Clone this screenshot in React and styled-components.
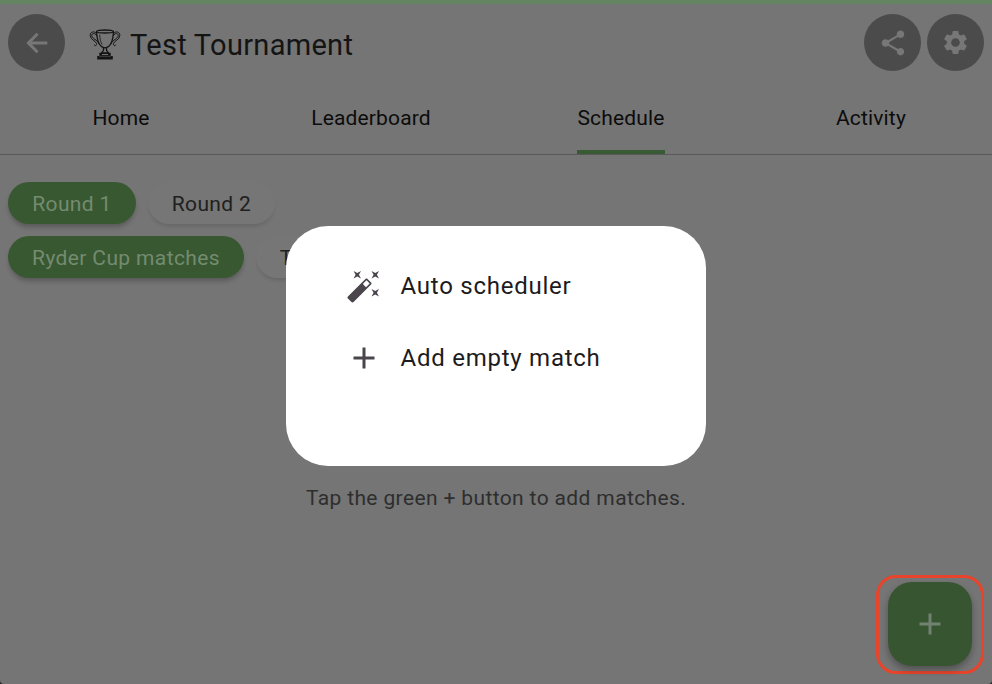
import React from "react";
import styled, { createGlobalStyle } from "styled-components";
import { MdAdd, MdSettings, MdShare } from "react-icons/md";

const GlobalStyle = createGlobalStyle`
  * { box-sizing: border-box; }
  html, body { margin: 0; background: #242424; overflow: hidden; }
  body { font-family: Roboto, "Liberation Sans", sans-serif; }
  button { font: inherit; border: 0; padding: 0; }
  svg { display: block; flex: none; }
`;

const Screen = styled.div`
  position: relative;
  width: 992px;
  height: 684px;
  display: flex;
  flex-direction: column;
  background: #757575;
  border-top: 4px solid #638561;
  border-radius: 0 0 4px 4px;
  overflow: hidden;
`;

const TopBar = styled.header`
  height: 77px;
  padding: 0 8px;
  display: flex;
  align-items: center;
`;

const RoundButton = styled.button`
  width: 57px;
  height: 57px;
  border-radius: 50%;
  display: grid;
  place-items: center;
  background: #4b4b4b;
  color: #777;
`;

const Title = styled.h1`
  flex: 1;
  margin: 0 0 0 24px;
  padding-top: 5px;
  display: flex;
  align-items: center;
  gap: 9px;
  font-size: 29px;
  line-height: 36px;
  font-weight: 400;
  letter-spacing: 0.3px;
  color: #141414;
`;

const Actions = styled.div`
  display: flex;
  gap: 6px;
`;

const Tabs = styled.nav`
  height: 74px;
  display: grid;
  grid-template-columns: repeat(4, 250px);
  justify-content: center;
  border-bottom: 1px solid #585958;
`;

const Tab = styled.button`
  justify-self: center;
  display: flex;
  align-items: center;
  padding-top: 4px;
  background: none;
  font-size: 21px;
  letter-spacing: 0.15px;
  color: #0c0c0c;
  border-bottom: 4px solid ${(p) => (p.$active ? "#385a34" : "transparent")};
`;

const Filters = styled.section`
  padding: 27px 8px 0;
  display: flex;
  flex-direction: column;
  gap: 12px;
`;

const ChipRow = styled.div`
  display: flex;
  gap: 12px;
`;

const Chip = styled.button`
  width: ${(p) => p.$width}px;
  height: 42px;
  padding-top: 2px;
  border-radius: 21px;
  font-size: 21px;
  letter-spacing: 0.37px;
  white-space: nowrap;
  background: ${(p) => (p.$selected ? "#385831" : "#767676")};
  color: ${(p) => (p.$selected ? "#748b70" : "#202020")};
  box-shadow: ${(p) =>
    p.$selected ? "0 4px 5px -1px rgba(0,0,0,.24)" : "0 4px 4px -2px rgba(0,0,0,.14)"};
`;

const Hint = styled.p`
  margin: 205px 0 0;
  text-align: center;
  font-size: 21px;
  line-height: 30px;
  letter-spacing: 0.37px;
  color: #2e2e2e;
`;

const FabFrame = styled.div`
  position: absolute;
  right: 8px;
  bottom: 10px;
  width: 108px;
  height: 99px;
  padding: 4px 0 0 9px;
  border: 3px solid #e6452b;
  border-radius: 20px;
`;

const Fab = styled.button`
  width: 84px;
  height: 84px;
  border-radius: 24px;
  display: grid;
  place-items: center;
  background: #385532;
  color: #718370;
  box-shadow: 0 4px 7px rgba(0, 0, 0, 0.3);
`;

const Dialog = styled.div`
  position: absolute;
  left: 286px;
  top: 222px;
  width: 420px;
  height: 240px;
  padding: 24px 60px;
  border-radius: 42px;
  background: #fff;
`;

const MenuItem = styled.button`
  width: 100%;
  height: 72px;
  display: flex;
  align-items: center;
  gap: 18.5px;
  background: none;
  font-size: 24px;
  letter-spacing: 0.75px;
  text-align: left;
  color: #1d1b20;
  svg { color: #49454b; }
`;

const BackIcon = () => (
  <svg width="30" height="30" viewBox="0 0 30 30" fill="none" stroke="currentColor" strokeWidth="3">
    <path d="M25.3 15H7M15.600 5.800L6.400 15L15.600 24.200" />
  </svg>
);

const TrophyIcon = () => (
  <svg width="32" height="32" viewBox="0 0 32 32" fill="none" stroke="currentColor" strokeWidth="1.3" strokeLinejoin="round">
    <path d="M7.5 2.5C8 11 9.5 18.5 16 18.8C22.5 18.5 24 11 24.5 2.5" />
    <ellipse cx="16" cy="2.5" rx="8.5" ry="1.5" />
    <path d="M7.7 4.8C5.5 1.7 1 2.6 1.2 6.5C1.5 11 6.5 11.4 7.5 14.5C8 16.8 5.5 17.3 5.3 15.7M9.8 14.8C8.5 10.5 3 10 2.8 6.5C2.7 4 6.2 3.6 7.9 7" strokeWidth="1" />
    <path d="M24.3 4.8C26.5 1.7 31 2.6 30.8 6.5C30.5 11 25.5 11.4 24.5 14.5C24 16.8 26.5 17.3 26.7 15.7M22.2 14.8C23.5 10.5 29 10 29.2 6.5C29.3 4 25.8 3.6 24.1 7" strokeWidth="1" />
    <path d="M10.7 5.5C10.9 10 11.7 13.5 13.2 15.5" strokeWidth="0.8" />
    <path d="M14.5 18.7V21.3L12.5 23.8H19.5L17.5 21.3V18.7" />
    <path d="M10.3 23.7H21.7V27H23.8V30.5H8.2V27H10.3Z" fill="currentColor" stroke="none" />
    <path d="M13 25.5H19" stroke="#757575" strokeWidth="1.2" />
    <path d="M10 27.3H22" stroke="#757575" strokeWidth="0.5" />
  </svg>
);

const WandIcon = () => (
  <svg width="36" height="36" viewBox="0 0 24 24" fill="currentColor">
    <path d="M7.5,5.6L5,7L6.4,4.5L5,2L7.5,3.4L10,2L8.6,4.5L10,7L7.5,5.6M19.5,15.4L22,14L20.6,16.5L22,19L19.5,17.6L17,19L18.4,16.5L17,14L19.5,15.4M22,2L20.6,4.5L22,7L19.5,5.6L17,7L18.4,4.5L17,2L19.5,3.4L22,2M13.34,12.78L15.78,10.34L13.66,8.22L11.22,10.66L13.34,12.78M14.37,7.29L16.71,9.63C17.1,10 17.1,10.65 16.71,11.04L5.04,22.71C4.65,23.1 4,23.1 3.63,22.71L1.29,20.37C0.9,20 0.9,19.35 1.29,18.96L12.96,7.29C13.35,6.9 14,6.9 14.37,7.29Z" />
  </svg>
);

export default function App() {
  return (
    <>
      <GlobalStyle />
      <Screen>
        <TopBar>
          <RoundButton aria-label="Back"><BackIcon /></RoundButton>
          <Title><TrophyIcon />Test Tournament</Title>
          <Actions>
            <RoundButton aria-label="Share"><MdShare size={30} /></RoundButton>
            <RoundButton aria-label="Settings"><MdSettings size={29} /></RoundButton>
          </Actions>
        </TopBar>
        <Tabs>
          <Tab>Home</Tab>
          <Tab>Leaderboard</Tab>
          <Tab $active>Schedule</Tab>
          <Tab>Activity</Tab>
        </Tabs>
        <Filters>
          <ChipRow>
            <Chip $selected $width={128}>Round 1</Chip>
            <Chip $width={127}>Round 2</Chip>
          </ChipRow>
          <ChipRow>
            <Chip $selected $width={236}>Ryder Cup matches</Chip>
            <Chip $width={191}>Team matches</Chip>
          </ChipRow>
        </Filters>
        <Hint>Tap the green + button to add matches.</Hint>
        <FabFrame>
          <Fab aria-label="Add match"><MdAdd size={36} /></Fab>
        </FabFrame>
        <Dialog role="dialog">
          <MenuItem><WandIcon />Auto scheduler</MenuItem>
          <MenuItem><MdAdd size={36} />Add empty match</MenuItem>
        </Dialog>
      </Screen>
    </>
  );
}
